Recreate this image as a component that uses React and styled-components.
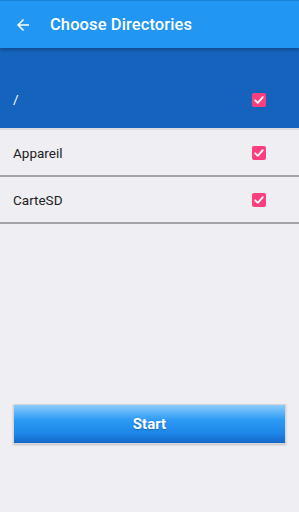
import React from "react";
import styled, { createGlobalStyle } from "styled-components";

const Global = createGlobalStyle`
  html, body { margin: 0; padding: 0; background: #efeff3; }
  body { font-family: Roboto, "Noto Sans", sans-serif; }
`;

const Screen = styled.div`
  width: 299px;
  height: 512px;
  background: #efeff3;
  display: flex;
  flex-direction: column;
  overflow: hidden;
`;

const AppBar = styled.header`
  height: 48px;
  flex-shrink: 0;
  background: #2196f3;
  border-top: 1px solid #1a7fd6;
  box-sizing: border-box;
  display: flex;
  align-items: center;
  padding-left: 14px;
  gap: 18px;
  position: relative;
  z-index: 1;
  box-shadow: 0 2px 3px rgba(0, 0, 0, 0.25);
`;

const Title = styled.h1`
  margin: 0;
  color: #fff;
  font-size: 16.5px;
  font-weight: 500;
  letter-spacing: 0.1px;
`;

const List = styled.div`
  display: flex;
  flex-direction: column;
`;

const Row = styled.div`
  height: ${(p) => (p.$top ? "82px" : "47px")};
  flex-shrink: 0;
  box-sizing: border-box;
  display: flex;
  align-items: ${(p) => (p.$top ? "flex-end" : "center")};
  padding: ${(p) => (p.$top ? "0 33px 21px 13px" : "0 33px 0 13px")};
  justify-content: space-between;
  background: ${(p) => (p.$active ? "#1563bd" : "transparent")};
  color: ${(p) => (p.$active ? "#fff" : "#212121")};
  font-size: 13.5px;
  border-bottom: ${(p) => (p.$active ? "2px solid #dcdce0" : "2px solid #a4a4a6")};
`;

const Label = styled.span`
  line-height: 16px;
`;

const Check = styled.span`
  width: 14px;
  height: 14px;
  border-radius: 2px;
  background: #fd3f7f;
  display: flex;
  align-items: center;
  justify-content: center;
`;

const Spacer = styled.div`
  flex: 1;
`;

const StartButton = styled.button`
  margin: 0 13px 68px;
  height: 40px;
  flex-shrink: 0;
  border: 1px solid #d5d5da;
  border-radius: 0;
  background: linear-gradient(to bottom, #8ccbfb 0%, #2b9af5 40%, #1d86e8 75%, #1566c6 100%);
  color: #fff;
  font-family: Roboto, "Noto Sans", sans-serif;
  font-weight: 700;
  font-size: 15px;
  text-shadow: 0 1px 1px rgba(0, 0, 0, 0.25);
  box-shadow: 0 1px 2px rgba(0, 0, 0, 0.2);
  display: flex;
  align-items: center;
  justify-content: center;
`;

const CheckMark = () => (
  <svg width="12" height="12" viewBox="0 0 12 12">
    <path d="M2.2 6.3 L4.8 8.8 L9.8 3.2" fill="none" stroke="#fff" strokeWidth="1.8" strokeLinecap="round" strokeLinejoin="round" />
  </svg>
);

const BackArrow = () => (
  <svg width="18" height="18" viewBox="0 0 24 24">
    <path d="M20 11H7.83l5.59-5.59L12 4l-8 8 8 8 1.41-1.41L7.83 13H20v-2z" fill="#fff" />
  </svg>
);

const items = [
  { label: "/", top: true, active: true },
  { label: "Appareil" },
  { label: "CarteSD" },
];

export default function App() {
  return (
    <Screen>
      <Global />
      <AppBar>
        <BackArrow />
        <Title>Choose Directories</Title>
      </AppBar>
      <List>
        {items.map((it) => (
          <Row key={it.label} $top={it.top} $active={it.active}>
            <Label>{it.label}</Label>
            <Check>
              <CheckMark />
            </Check>
          </Row>
        ))}
      </List>
      <Spacer />
      <StartButton>Start</StartButton>
    </Screen>
  );
}
